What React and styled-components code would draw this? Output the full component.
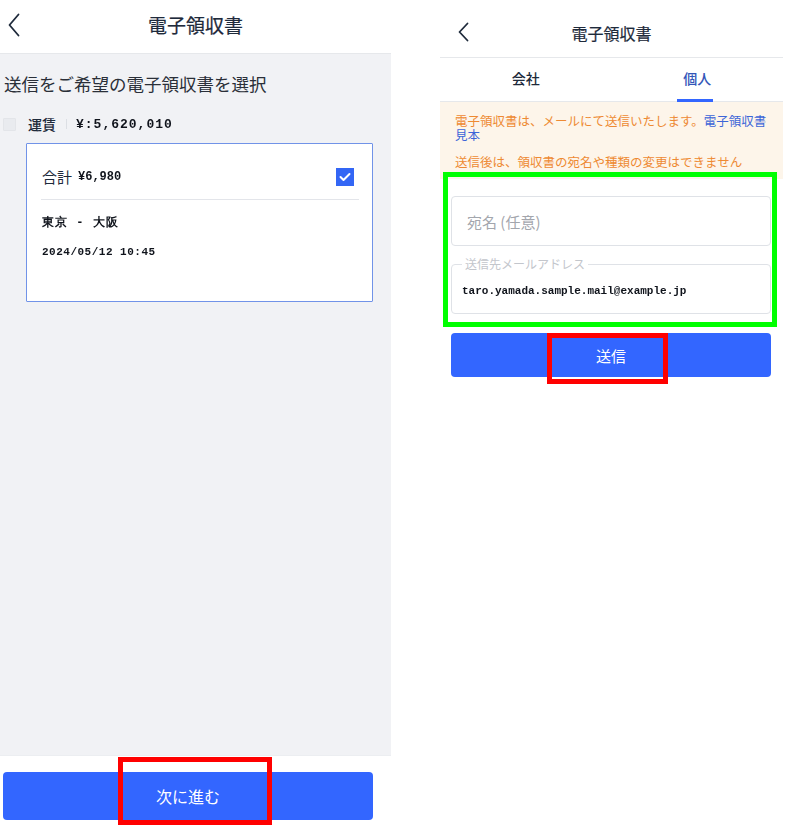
import React from "react";
import styled, { createGlobalStyle } from "styled-components";

const Global = createGlobalStyle`
  body {
    margin: 0;
    background: #ffffff;
    font-family: "Noto Sans CJK JP", "Noto Sans", sans-serif;
  }
`;

const Page = styled.div`
  position: relative;
  width: 786px;
  height: 828px;
  display: flex;
  gap: 49px;
  overflow: hidden;
  background: #fff;
`;

const Screen = styled.div`
  width: ${(p) => p.w}px;
  height: 828px;
  display: flex;
  flex-direction: column;
  background: #fff;
`;

const Header = styled.div`
  height: ${(p) => p.h}px;
  flex: 0 0 auto;
  display: flex;
  align-items: center;
  justify-content: center;
  position: relative;
  border-bottom: 1px solid #e6e8eb;
  box-sizing: border-box;
`;

const Back = styled.svg`
  position: absolute;
  left: ${(p) => p.l}px;
  top: ${(p) => p.t}px;
`;

const Title = styled.div`
  font-size: ${(p) => p.size}px;
  font-weight: 400;
  color: #1e2a3b;
  margin-top: ${(p) => p.mt || 0}px;
  -webkit-text-stroke: 0.2px #1e2a3b;
`;

const Body = styled.div`
  flex: 1;
  background: #f1f2f5;
  padding: 17px 0 0 4px;
`;

const Lead = styled.div`
  font-size: 17.5px;
  color: #2a2f38;
  line-height: 26px;
`;

const ItemRow = styled.div`
  display: flex;
  align-items: center;
  margin-top: 18px;
  height: 18px;
`;

const SmallBox = styled.span`
  width: 11px;
  height: 11px;
  border: 1px solid #e3e5e9;
  background: #e9ebef;
  border-radius: 1px;
  margin-left: -1px;
`;

const ItemName = styled.span`
  font-size: 14px;
  font-weight: 500;
  color: #1e2a3b;
  margin-left: 12px;
`;

const VBar = styled.span`
  width: 1px;
  height: 10px;
  background: #dcdfe4;
  margin: 0 9px 0 10px;
`;

const Masked = styled.span`
  font-family: "Liberation Mono", monospace;
  font-size: ${(p) => p.size || 13}px;
  font-weight: 700;
  color: #10141c;
  filter: blur(0.6px);
  letter-spacing: ${(p) => p.ls || 0}px;
`;

const Card = styled.div`
  margin: 10px 0 0 22px;
  width: 347px;
  height: 159px;
  box-sizing: border-box;
  background: #fff;
  border: 1px solid #7193e8;
  border-radius: 1px;
  padding: 0 18px 0 14px;
`;

const CardTop = styled.div`
  height: 56px;
  box-sizing: border-box;
  padding-top: 10px;
  display: flex;
  align-items: center;
  justify-content: space-between;
  border-bottom: 1px solid #e3e5ea;
  margin-right: -5px;
`;

const Total = styled.div`
  display: flex;
  align-items: center;
  font-size: 15px;
  color: #1e2a3b;
  gap: 6px;
  padding-left: 1px;
`;

const Check = styled.span`
  width: 18px;
  height: 18px;
  background: #3366f5;
  display: flex;
  align-items: center;
  justify-content: center;
  margin-right: 5px;
`;

const CardLine = styled.div`
  margin-top: ${(p) => p.mt}px;
  height: 18px;
  display: flex;
  align-items: center;
  padding-left: 1px;
`;

const Footer = styled.div`
  height: 73px;
  flex: 0 0 auto;
  border-top: 1px solid #eceef1;
  box-sizing: border-box;
  padding: 16px 18px 0 3px;
`;

const BlueButton = styled.div`
  height: ${(p) => p.h}px;
  margin-top: ${(p) => p.mt || 0}px;
  background: #3366ff;
  border-radius: 4px;
  color: #fff;
  font-size: ${(p) => p.size}px;
  display: flex;
  align-items: center;
  justify-content: center;
`;

const Tabs = styled.div`
  height: 44px;
  display: flex;
  border-bottom: 1px solid #e6e8eb;
  box-sizing: border-box;
`;

const Tab = styled.div`
  flex: 1;
  position: relative;
  display: flex;
  align-items: center;
  justify-content: center;
  font-size: 14px;
  font-weight: 500;
  color: ${(p) => (p.active ? "#3356b8" : "#1e2a3b")};
  padding-bottom: 4px;
  &::after {
    content: "";
    display: ${(p) => (p.active ? "block" : "none")};
    position: absolute;
    bottom: -1px;
    left: 50%;
    width: 36px;
    margin-left: -20px;
    height: 3px;
    background: #3366ff;
  }
`;

const Notice = styled.div`
  background: #fdf5ea;
  padding: 12px 12px 10px 15px;
  font-size: 12.5px;
  line-height: 14px;
  color: #ee8a33;
`;

const NoticeP = styled.p`
  margin: 0 0 ${(p) => p.mb || 0}px;
`;

const Link = styled.span`
  color: #3d66d8;
`;

const Form = styled.div`
  padding: 17px 12px 0 11px;
  display: flex;
  flex-direction: column;
`;

const Input = styled.div`
  height: 50px;
  box-sizing: border-box;
  border: 1px solid #dfe2e7;
  border-radius: 4px;
  display: flex;
  align-items: center;
  padding-left: 15px;
  font-size: 15px;
  color: #a3a6ad;
`;

const Field = styled.fieldset`
  margin: 12px 0 0;
  height: 56px;
  box-sizing: border-box;
  border: 1px solid #dfe2e7;
  border-radius: 4px;
  padding: 0 0 0 10px;
`;

const Legend = styled.legend`
  font-size: 12px;
  line-height: 12px;
  color: #c3c6cc;
  padding: 0 3px;
  margin-left: 0;
`;

const FieldValue = styled.div`
  height: 42px;
  display: flex;
  align-items: center;
`;

const Mark = styled.div`
  position: absolute;
  left: ${(p) => p.x}px;
  top: ${(p) => p.y}px;
  width: ${(p) => p.w}px;
  height: ${(p) => p.h}px;
  box-sizing: border-box;
  border: ${(p) => p.b}px solid ${(p) => p.c};
  pointer-events: none;
`;

const Chevron = ({ l, t, w, h }) => (
  <Back l={l} t={t} width={w} height={h} viewBox={`0 0 ${w} ${h}`}>
    <polyline
      points={`${w - 1.5},1.5 1.5,${h / 2} ${w - 1.5},${h - 1.5}`}
      fill="none"
      stroke="#1e2a3b"
      strokeWidth="1.8"
      strokeLinecap="round"
      strokeLinejoin="round"
    />
  </Back>
);

export default function App() {
  return (
    <>
      <Global />
      <Page>
        <Screen w={391}>
          <Header h={54}>
            <Chevron l={8} t={13} w={12} h={24} />
            <Title size={19} mt={-5}>電子領収書</Title>
          </Header>
          <Body>
            <Lead>送信をご希望の電子領収書を選択</Lead>
            <ItemRow>
              <SmallBox />
              <ItemName>運賃</ItemName>
              <VBar />
              <Masked ls={1}>¥:5,620,010</Masked>
            </ItemRow>
            <Card>
              <CardTop>
                <Total>
                  合計
                  <Masked size={12}>¥6,980</Masked>
                </Total>
                <Check>
                  <svg width="12" height="10" viewBox="0 0 12 10">
                    <polyline
                      points="1.5,5 4.5,8 10.5,2"
                      fill="none"
                      stroke="#fff"
                      strokeWidth="2"
                      strokeLinecap="round"
                      strokeLinejoin="round"
                    />
                  </svg>
                </Check>
              </CardTop>
              <CardLine mt={13}>
                <Masked size={12} ls={1}>東京 - 大阪</Masked>
              </CardLine>
              <CardLine mt={12}>
                <Masked size={11} ls={0.5}>2024/05/12 10:45</Masked>
              </CardLine>
            </Card>
          </Body>
          <Footer>
            <BlueButton h={48} size={16}>次に進む</BlueButton>
          </Footer>
        </Screen>

        <Screen w={343}>
          <Header h={58}>
            <Chevron l={18} t={22} w={11} h={20} />
            <Title size={16} mt={8}>電子領収書</Title>
          </Header>
          <Tabs>
            <Tab>会社</Tab>
            <Tab active>個人</Tab>
          </Tabs>
          <Notice>
            <NoticeP mb={13}>
              電子領収書は、メールにて送信いたします。<Link>電子領収書見本</Link>
            </NoticeP>
            <NoticeP>送信後は、領収書の宛名や種類の変更はできません</NoticeP>
          </Notice>
          <Form>
            <Input>宛名 (任意)</Input>
            <Field>
              <Legend>送信先メールアドレス</Legend>
              <FieldValue>
                <Masked size={11}>taro.yamada.sample.mail@example.jp</Masked>
              </FieldValue>
            </Field>
            <BlueButton h={44} size={15} mt={19}>送信</BlueButton>
          </Form>
        </Screen>

        <Mark x={118} y={757} w={154} h={68} b={5} c="#ff0000" />
        <Mark x={443} y={172} w={334} h={155} b={5} c="#00ff00" />
        <Mark x={547} y={333} w={121} h={51} b={5} c="#ff0000" />
      </Page>
    </>
  );
}
